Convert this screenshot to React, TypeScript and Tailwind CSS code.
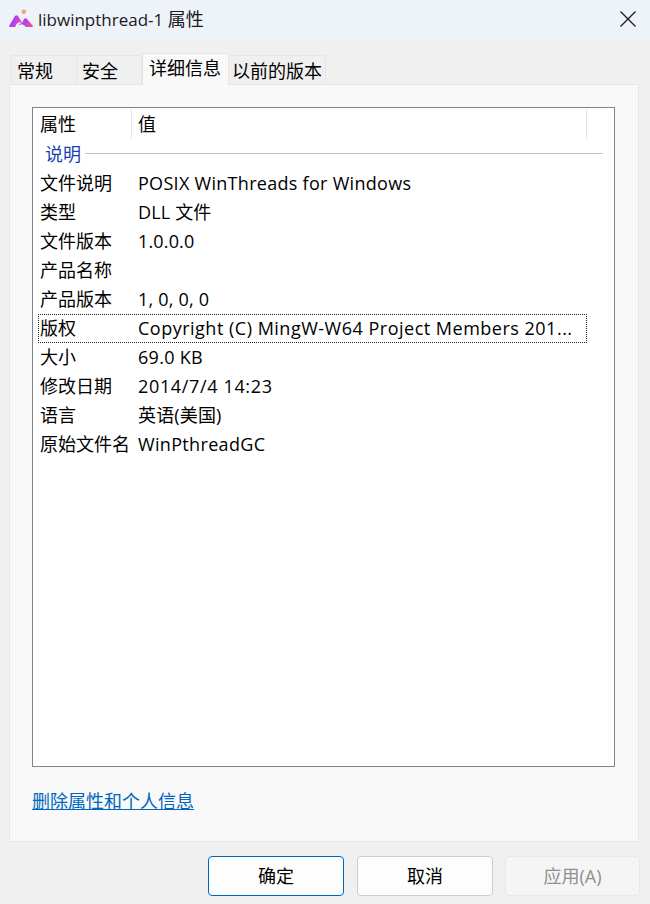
const rows = [
  { name: "文件说明", value: "POSIX WinThreads for Windows", track: "tracking-[0.29px]" },
  { name: "类型", value: "DLL 文件", track: "tracking-[0.15px]" },
  { name: "文件版本", value: "1.0.0.0", track: "tracking-[0.15px]" },
  { name: "产品名称", value: "", track: "" },
  { name: "产品版本", value: "1, 0, 0, 0", track: "tracking-[0.2px]" },
  { name: "版权", value: "Copyright (C) MingW-W64 Project Members 201...", track: "tracking-[0.5px]", focused: true },
  { name: "大小", value: "69.0 KB", track: "tracking-[0.3px]" },
  { name: "修改日期", value: "2014/7/4 14:23", track: "tracking-[0.65px]" },
  { name: "语言", value: "英语(美国)", track: "tracking-[0.15px]" },
  { name: "原始文件名", value: "WinPthreadGC", track: "tracking-[0.33px]" },
];

function Logo() {
  return (
    <svg width="24" height="20" viewBox="0 0 24 20" className="shrink-0">
      <defs>
        <linearGradient id="lg" x1="0" y1="0" x2="1" y2="0.3">
          <stop offset="0" stopColor="#7b4dff" />
          <stop offset="0.5" stopColor="#b43ff0" />
          <stop offset="1" stopColor="#ea4fa8" />
        </linearGradient>
      </defs>
      <path d="M0 17 L6 7 Q7.5 5.5 9 7 L13.5 14 Q10 12 7.5 15 L6.5 17.5 Q6 18 5 18 L1 18 Q0 18 0 17Z" fill="url(#lg)" />
      <path d="M15 10 Q16.5 8.5 18 10 L24 17 Q24 18 23 18 L17 18 Q13 13 9 17 Q10.5 14 13 14Z" fill="url(#lg)" />
      <circle cx="14.8" cy="2.8" r="2.3" fill="#f8a56a" />
    </svg>
  );
}

export default function App() {
  return (
    <div className="w-[650px] h-[904px] bg-[#f0f0f0] flex flex-col text-[18px] text-black overflow-hidden font-['Open_Sans','Noto_Sans_CJK_SC',sans-serif]">
      {/* Title bar */}
      <div className="h-[41px] shrink-0 bg-[#eef2f9] flex items-center pl-[9px] pr-[14px] pb-[4px]">
        <Logo />
        <span className="ml-[5px] leading-none text-[#1a1a1a] whitespace-nowrap">
          <span className="text-[17px]">libwinpthread-1 </span>属性
        </span>
        <svg width="16" height="16" viewBox="0 0 16 16" className="ml-auto" stroke="#1a1a1a" strokeWidth="1.3">
          <path d="M0.5 0.5 L15.5 15.5 M15.5 0.5 L0.5 15.5" />
        </svg>
      </div>

      {/* Tabs */}
      <div className="h-[43px] shrink-0 flex items-end pl-[11px] relative z-10">
        <div className="w-[66px] h-[29px] border border-b-0 border-[#e6e6e6] pl-[5px] leading-[31px]">常规</div>
        <div className="w-[65px] h-[29px] border border-b-0 border-l-0 border-[#e6e6e6] pl-[5px] leading-[31px]">安全</div>
        <div className="w-[87px] h-[32px] -mb-px bg-[#f9f9f9] border border-b-0 border-[#e6e6e6] pl-[6px] leading-[28px]">详细信息</div>
        <div className="w-[97px] h-[29px] border border-b-0 border-l-0 border-[#e6e6e6] pl-[3px] leading-[31px]">以前的版本</div>
      </div>

      {/* Panel */}
      <div className="ml-[9px] mr-[11px] h-[758px] shrink-0 bg-[#f9f9f9] border border-[#e6e6e6] pt-[22px] pl-[22px] pr-[23px] flex flex-col">
        <div className="h-[660px] shrink-0 bg-white border border-[#80858c]">
          {/* Column headers */}
          <div className="h-[31px] flex items-center">
            <div className="w-[99px] h-[30px] pl-[7px] border-r border-[#e5e5e5] leading-[30px]">属性</div>
            <div className="w-[455px] h-[30px] pl-[6px] border-r border-[#e5e5e5] leading-[30px]">值</div>
          </div>
          {/* Group */}
          <div className="h-[30px] flex items-center pl-[12px] pr-[11px]">
            <span className="text-[#1a3fb0] leading-none">说明</span>
            <div className="flex-1 h-px bg-[#bcc4d6] ml-[4px] -mt-[2px]"></div>
          </div>
          {rows.map((r) => (
            <div
              key={r.name}
              className={
                r.focused
                  ? "h-[29px] w-[549px] ml-[5px] flex items-center border border-dotted border-[#222]"
                  : "h-[29px] w-[549px] ml-[5px] flex items-center border border-transparent"
              }
            >
              <div className="w-[99px] pl-[1px] shrink-0 whitespace-nowrap">{r.name}</div>
              <div className={"whitespace-nowrap " + r.track}>{r.value}</div>
            </div>
          ))}
        </div>
        <div className="mt-[21px] text-[#0067c0] underline leading-[26px]">删除属性和个人信息</div>
      </div>

      {/* Buttons */}
      <div className="flex justify-end pr-[10px] mt-[14px]">
        <button className="w-[136px] h-[40px] bg-[#fdfdfd] border border-[#0067c0] rounded-[4px]">确定</button>
        <button className="w-[136px] h-[40px] ml-[13px] bg-[#fdfdfd] border border-[#cccccc] rounded-[4px]">取消</button>
        <button className="w-[135px] h-[40px] ml-[12px] bg-[#f5f5f5] border border-[#e8e8e8] rounded-[4px] text-[#8f8f8f]">应用(A)</button>
      </div>
    </div>
  );
}
